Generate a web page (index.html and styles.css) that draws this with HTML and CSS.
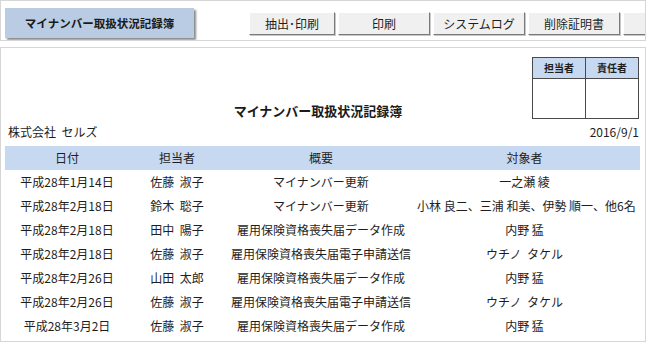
FILE: index.html
```html
<!DOCTYPE html>
<html lang="ja">
<head>
  <meta charset="UTF-8">
  <title>マイナンバー取扱状況記録簿</title>
  <link rel="stylesheet" href="styles.css">
</head>
<body>

  <div class="header">
    <div class="page-tab">マイナンバー取扱状況記録簿</div>
    <div class="toolbar">
      <button class="tool-button tool-button-narrow">抽出･印刷</button>
      <button class="tool-button">印刷</button>
      <button class="tool-button">システムログ</button>
      <button class="tool-button">削除証明書</button>
      <button class="tool-button"></button>
    </div>
  </div>

  <div class="sheet">
    <div class="sheet-top">
      <h1 class="sheet-title">マイナンバー取扱状況記録簿</h1>
      <table class="stamp">
        <tr><th>担当者</th><th>責任者</th></tr>
        <tr><td></td><td></td></tr>
      </table>
    </div>

    <div class="sheet-meta">
      <span>株式会社&nbsp;&nbsp;セルズ</span>
      <span>2016/9/1</span>
    </div>

    <table class="records">
      <colgroup>
        <col class="col-date">
        <col class="col-staff">
        <col class="col-summary">
        <col class="col-target">
      </colgroup>
      <thead>
        <tr><th>日付</th><th>担当者</th><th>概要</th><th class="target">対象者</th></tr>
      </thead>
      <tbody>
        <tr><td>平成28年1月14日</td><td>佐藤&nbsp;&nbsp;淑子</td><td>マイナンバー更新</td><td class="target">一之瀬 綾</td></tr>
        <tr><td>平成28年2月18日</td><td>鈴木&nbsp;&nbsp;聡子</td><td>マイナンバー更新</td><td class="target">小林 良二、三浦 和美、伊勢 順一、他6名</td></tr>
        <tr><td>平成28年2月18日</td><td>田中&nbsp;&nbsp;陽子</td><td>雇用保険資格喪失届データ作成</td><td class="target">内野 猛</td></tr>
        <tr><td>平成28年2月18日</td><td>佐藤&nbsp;&nbsp;淑子</td><td>雇用保険資格喪失届電子申請送信</td><td class="target">ウチノ&nbsp;&nbsp;タケル</td></tr>
        <tr><td>平成28年2月26日</td><td>山田&nbsp;&nbsp;太郎</td><td>雇用保険資格喪失届データ作成</td><td class="target">内野 猛</td></tr>
        <tr><td>平成28年2月26日</td><td>佐藤&nbsp;&nbsp;淑子</td><td>雇用保険資格喪失届電子申請送信</td><td class="target">ウチノ&nbsp;&nbsp;タケル</td></tr>
        <tr><td>平成28年3月2日</td><td>佐藤&nbsp;&nbsp;淑子</td><td>雇用保険資格喪失届データ作成</td><td class="target">内野 猛</td></tr>
      </tbody>
    </table>
  </div>

</body>
</html>
```

FILE: styles.css
```css
body {
  margin: 0;
  background: #ffffff;
  font-family: "Noto Sans CJK JP", sans-serif;
  font-size: 12px;
  color: #1e1e1e;
}

.header {
  width: 646px;
  height: 41px;
  box-sizing: border-box;
  border: 1px solid #d6d6d6;
  display: flex;
  align-items: center;
  overflow: hidden;
}

.page-tab {
  flex-shrink: 0;
  width: 189px;
  height: 30px;
  margin-left: 4px;
  margin-top: 4px;
  background: #b9cce4;
  box-shadow: 2px 2px 2px #8a8a8a;
  font-size: 11.5px;
  font-weight: bold;
  line-height: 30px;
  text-align: center;
  color: #1a1a1a;
}

.toolbar {
  display: flex;
  gap: 3px;
  margin-left: 55px;
  margin-top: 5px;
  flex-shrink: 0;
}

.tool-button {
  flex-shrink: 0;
  width: 92px;
  height: 23px;
  padding: 0;
  background: #f0f0f0;
  border: 1px solid;
  border-color: #ffffff #7a7a7a #7a7a7a #ffffff;
  box-shadow: 1px 1px 0 #c8c8c8;
  font-family: inherit;
  font-size: 12px;
  color: #1e1e1e;
  line-height: 21px;
}

.tool-button-narrow {
  width: 86px;
}

.sheet {
  width: 646px;
  height: 295px;
  box-sizing: border-box;
  margin-top: 6px;
  border: 1px solid #d6d6d6;
  padding: 9px 4px 0 4px;
}

.sheet-top {
  display: grid;
  grid-template-columns: 1fr auto 1fr;
}

.sheet-title {
  grid-column: 2;
  align-self: end;
  margin: 0 0 0 -10px;
  font-size: 13px;
  font-weight: bold;
  line-height: 16px;
  color: #1a1a1a;
}

.stamp {
  grid-column: 3;
  justify-self: end;
  margin-right: 2px;
  border-collapse: collapse;
}

.stamp th,
.stamp td {
  width: 52px;
  border: 1px solid #4a4a4a;
  padding: 0;
}

.stamp th {
  height: 20px;
  background: #c6d9f1;
  font-size: 10px;
  font-weight: bold;
  line-height: 20px;
}

.stamp td {
  height: 39px;
}

.sheet-meta {
  display: flex;
  justify-content: space-between;
  padding: 0 2px 0 3px;
  margin-top: 5px;
  line-height: 16px;
}

.records {
  width: 635px;
  margin-top: 6px;
  border-collapse: collapse;
  table-layout: fixed;
}

.col-date { width: 124px; }
.col-staff { width: 96px; }
.col-summary { width: 192px; }

.records th,
.records td {
  height: 24px;
  padding: 0;
  text-align: center;
  font-weight: normal;
  white-space: nowrap;
  line-height: 24px;
}

.records .target {
  padding-right: 8px;
}

.records th {
  background: #c6d9f1;
}
```
